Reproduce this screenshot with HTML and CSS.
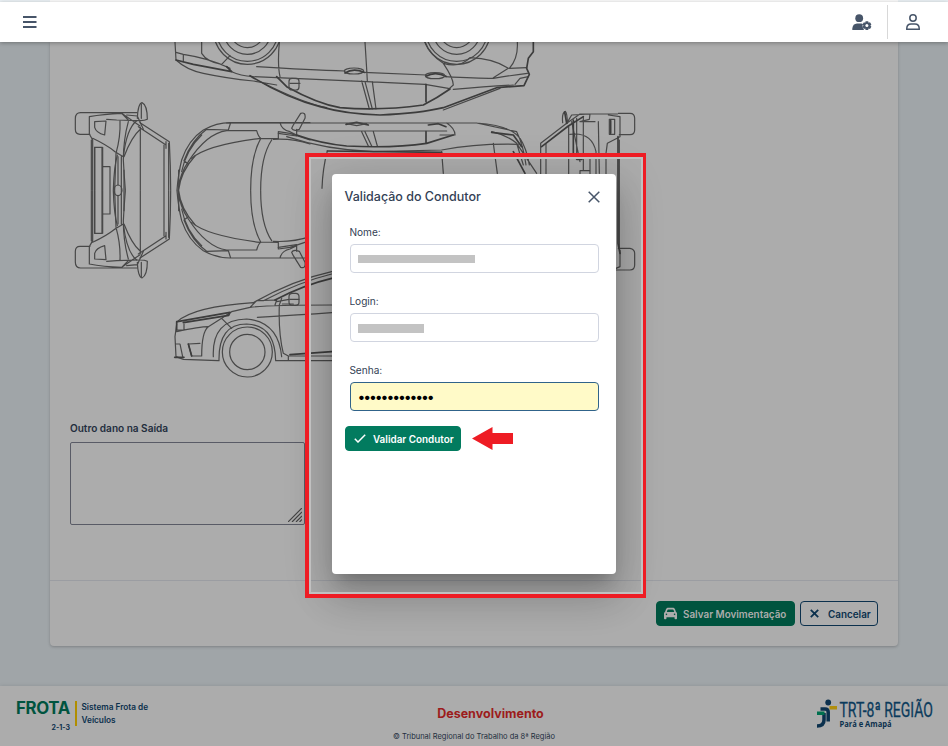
FILE: index.html
```html
<!DOCTYPE html>
<html lang="pt-BR">
<head>
<meta charset="utf-8">
<title>Frota - Validação do Condutor</title>
<link rel="stylesheet" href="styles.css">
</head>
<body>
<div class="page">
  <div class="strip"><div class="strip-card"></div></div>
  <header class="topbar">
    <svg class="menu" viewBox="0 0 14 12"><path d="M0 1h13.5M0 6h13.5M0 11h13.5"/></svg>
    <svg class="usergear" viewBox="0 0 20 17"><circle cx="7.2" cy="4.2" r="3.9"/><path d="M.3 16v-1.4Q.8 9.8 5 9.6h4.500q.8 0 1.400.3-1 2.500.1 4.100.3 1 1.200 2z"/><path d="M13.600 7.200h2.600l.4 1.500 1.400-.5 1.400 2.200-1 1.100 1 1.200-1.400 2.200-1.400-.4-.4 1.400h-2.600l-.4-1.400-1.300.4-1.400-2.200 1-1.200-1-1.100 1.400-2.200 1.300.5z"/><circle class="hole" cx="14.900" cy="11.500" r="1.500"/></svg>
    <span class="divider"></span>
    <svg class="user" viewBox="0 0 14 16"><circle cx="7" cy="4" r="3.200"/><path d="M.8 15.200v-1Q1 10 5 9.900h4q4 .1 4.200 4.300v1z"/></svg>
  </header>
  <main class="content">
    <section class="card">
      <svg class="cars" viewBox="70 42 580 340">
        <defs>
          <g id="half">
            <path d="M90 68H62Q46 68 46 86V118Q46 133 60 133H90M98 300V150L88 132V80Q130 72 185 70L240 108M104 95L138 93L134 135Q108 128 104 112ZM60 68L230 68M140 88L170 90L235 92M98 145Q140 165 165 185L190 200M180 92Q182 140 168 190L164 300M205 95Q190 150 190 210Q192 250 196 300M184 200V300M174 200V285M241 112V300M241 118Q215 140 192 200M326 160V300M312 165V300M185 70L205 90M104 300V172H126V300M128 230H150V300M94 150V300M232 85Q234 40 246 38Q262 45 262 88Q255 92 240 92M200 75L232 78L250 118"/>
            <path class="bold" d="M190 200Q200 115 230 92M240 98L328 155Q332 230 332 300M235 110L318 165M244 42V85M160 300Q162 230 172 195M318 155V175M192 240V300M104 172V300M128 172V300"/>
            <path d="M351 300Q355 250 365 210Q385 150 430 120Q470 98 510 98H750M372 212Q395 150 440 118L505 120L512 98M365 245Q378 180 425 135M602 146Q572 200 572 300M635 150Q602 200 602 300M602 146L655 145V125L690 130L750 150M640 148Q700 145 750 162M700 105L722 70Q738 65 735 85L718 118Q700 125 695 115ZM660 98Q665 120 690 125L710 135V118M372 212L385 222M395 205Q440 165 600 145"/>
            <path class="bold" d="M354 300Q360 250 385 215Q440 130 500 122H590Q595 140 602 145M356 240V300M356 300Q362 245 405 198M655 130L710 138"/>
          </g>
        </defs>
        <g class="ink" transform="translate(60 90) scale(.33333)">
          <use href="#half"/>
          <use href="#half" transform="translate(0 602) scale(1 -1)"/>
          <ellipse cx="174" cy="301" rx="12" ry="16"/>
        </g>
        <g class="ink" transform="translate(160 35) scale(.33333)">
          <circle cx="262" cy="-13" r="101"/><circle cx="262" cy="-13" r="92"/><circle cx="262" cy="-13" r="71"/><circle cx="262" cy="-13" r="51"/>
          <circle cx="890" cy="-13" r="101"/><circle cx="890" cy="-13" r="92"/><circle cx="890" cy="-13" r="71"/><circle cx="890" cy="-13" r="51"/>
          <path d="M45 22L48 75Q80 105 130 115Q200 130 280 138L350 150M48 52L70 58Q150 70 210 100M70 58V80M125 22V55Q140 80 185 88L210 62M358 22Q352 90 360 125M615 22Q620 100 622 138M290 95Q450 105 555 108M610 112Q700 116 800 120M855 125Q950 130 1000 130M215 110Q240 122 280 125Q400 130 620 140L795 148L865 160M305 142Q430 205 500 218M605 138L628 222M615 140L637 222M637 140L648 222M795 22Q810 60 850 85Q880 130 880 150L865 163M880 163Q980 155 1060 150M930 68Q1000 70 1045 100L1000 128M1072 22Q1075 70 1048 100L1100 98M1000 130Q1060 120 1102 115M1065 148L1080 130L1105 125M850 225L1020 160M390 145H420M850 85Q900 100 930 68"/>
          <path class="bold" d="M48 75L100 88L215 110L200 95M270 122Q380 190 480 215Q560 238 660 240Q780 235 850 218L1010 158L1092 152L1108 118L1100 100L1105 70L1120 50V22M350 125L380 155Q470 205 540 218Q660 228 790 210Q830 190 870 162M798 148V200"/>
          <ellipse cx="582" cy="108" rx="29" ry="9"/><path class="bold" d="M555 114Q580 98 612 112M798 124Q825 108 858 124M558 268L590 262 625 270M805 270L835 266 858 275"/><ellipse cx="825" cy="122" rx="29" ry="9"/><rect x="387" y="130" width="30" height="35" rx="9"/>
          <path d="M200 264H950Q1050 270 1080 310Q1100 340 1108 390M950 264L1070 290Q1090 330 1098 390M995 290Q1040 300 1070 325L1090 390M845 345Q950 325 1075 328M410 288H860M860 264Q885 280 885 300L840 300M560 266L590 272 620 266M605 290L625 333M615 290L635 333M640 290L652 333M845 350L850 415M1000 325L1012 415M502 348Q488 400 486 460M380 305Q500 345 640 350L845 345M1070 325L1130 415"/>
          <path class="bold" d="M410 300Q480 325 560 333Q700 340 800 325L880 300M798 290V325M502 348L845 352M995 292L1060 300L1085 335M1060 350L1095 415"/>
        </g>
        <g class="ink" transform="translate(530 90) scale(.33333)">
          <path d="M32 255V160L110 100L150 72H262M48 255V162M265 70H300Q314 70 314 85V120Q314 134 300 134H268M98 98Q95 68 106 64Q112 70 112 100M116 108V255M125 95L150 215M140 85V205M160 80V240M120 133Q185 125 198 185V255M205 95L208 250M150 95H195M235 75L270 80V140L232 160L228 190V255M238 88H254V133H238ZM268 150V475M180 205V255M150 255V242H180V250M265 475H300Q314 478 314 490V525Q314 540 300 540H250M270 480V530L258 535M110 100L125 75L180 72L178 88L150 95"/>
          <path class="bold" d="M35 170L115 108L160 80M130 90V200M264 140V460L270 490M242 92V130M104 66L110 100M140 208H156"/>
        </g>
        <g class="ink" transform="translate(150 250) scale(.33333)">
          <circle cx="292" cy="306" r="75"/><circle cx="292" cy="306" r="53"/>
          <path d="M82 215Q130 170 310 158M80 222L75 260L78 320L100 328L205 332M190 320Q185 208 290 207Q385 215 395 320M207 332Q205 222 290 222Q375 225 377 332H545M78 240H102V222M80 245Q150 230 175 230Q155 245 155 318L125 318L115 282L150 280M78 282L90 282L98 320M215 205L245 235M175 230L215 205L245 185M310 158Q430 90 545 65M340 152Q450 95 545 72M300 172L320 152L380 150L375 165M245 185L300 172Q360 165 545 165M322 202Q450 195 545 188M395 145L388 165Q385 250 400 310L415 318H545M415 318V332M380 155L417 148M397 162H430"/>
          <path class="bold" d="M82 215L240 187L236 196L100 218M375 150Q460 105 545 85M74 322H102M115 282L125 318M420 314L545 305M80 215V240"/>
          <rect x="417" y="130" width="30" height="36" rx="10"/><path d="M420 148H447"/>
        </g>
      </svg>
      <div class="damage">
        <label for="dano">Outro dano na Saída</label>
        <div id="dano" class="textarea"><svg viewBox="0 0 14 14"><path d="M0 14L14 0M4 14L14 4M8 14L14 8M11.500 14L14 11.500"/></svg></div>
      </div>
      <div class="actions">
        <button class="btn save"><svg viewBox="0 0 512 512"><path d="M135.200 117.400L109.100 192H402.900l-26.100-74.600C372.300 104.600 360.200 96 346.600 96H165.400c-13.600 0-25.700 8.600-30.200 21.400zM39.600 196.800L74.800 96.300C88.300 57.800 124.600 32 165.400 32H346.600c40.800 0 77.100 25.800 90.600 64.300l35.200 100.500c23.200 9.600 39.600 32.500 39.600 59.200V448c0 17.700-14.300 32-32 32H448c-17.700 0-32-14.300-32-32V400H96v48c0 17.700-14.300 32-32 32H32c-17.700 0-32-14.300-32-32V256c0-26.700 16.400-49.600 39.600-59.200zM128 288a32 32 0 1 0-64 0 32 32 0 1 0 64 0zm288 32a32 32 0 1 0 0-64 32 32 0 1 0 0 64z"/></svg><span>Salvar Movimentação</span></button>
        <button class="btn cancel"><svg viewBox="0 0 8 8"><path d="M.7.7l6.600 6.600M7.300.7L.7 7.300"/></svg><span>Cancelar</span></button>
      </div>
    </section>
  </main>
  <footer class="footer">
    <div class="brand">
      <div class="brand-name"><strong>FROTA</strong><span>2-1-3</span></div>
      <div class="brand-desc">Sistema Frota de<br>Veículos</div>
    </div>
    <div class="env"><strong>Desenvolvimento</strong><small>© Tribunal Regional do Trabalho da 8ª Região</small></div>
    <svg class="trt" viewBox="816 690 124 46">
      <circle class="navy" cx="828.200" cy="702.500" r="2.900"/>
      <path class="limb" d="M820.500 709H825Q828.200 709 828.200 712V721.500"/>
      <path class="limb" d="M824 713V720Q824 726 817 726"/>
      <path class="yellow" d="M829.500 706h7.500v3.500h-7.500z"/><path class="green" d="M817 711.500h7.500v3.500H817z"/>
      <text class="trt-name" x="839.500" y="716.700" textLength="93.500" lengthAdjust="spacingAndGlyphs">TRT-8ª REGIÃO</text>
      <text class="trt-place" x="839.500" y="727" textLength="52" lengthAdjust="spacingAndGlyphs">Pará e Amapá</text>
    </svg>
  </footer>
</div>
<div class="dialog" role="dialog">
  <div class="dialog-head"><h1>Validação do Condutor</h1><svg viewBox="0 0 12 12"><path d="M.7.7l10.600 10.600M11.300.7L.7 11.300"/></svg></div>
  <div class="fields">
    <div class="field"><label>Nome:</label><div class="input"><span class="mask mask-name"></span></div></div>
    <div class="field"><label>Login:</label><div class="input"><span class="mask mask-login"></span></div></div>
    <div class="field"><label>Senha:</label><div class="input filled"><span class="dots">•••••••••••••</span></div></div>
  </div>
  <div class="submit">
    <button class="btn validate"><svg viewBox="0 0 12 9"><path d="M.8 4.800l3.200 3.200L11.200.8"/></svg><span>Validar Condutor</span></button>
    <svg class="arrow" viewBox="0 0 41 23"><path d="M0 11.500L20.500 0v6H41v11H20.500v6z"/></svg>
  </div>
</div>
<div class="frame"></div>
</body>
</html>
```
FILE: styles.css
```css
* { box-sizing: border-box; }
body { margin: 0; width: 948px; height: 746px; overflow: hidden; position: relative; font-family: Inter, "Liberation Sans", sans-serif; color: #334155; }
svg { display: block; flex: none; }
h1 { margin: 0; }
button { font: inherit; margin: 0; }
.page { display: flex; flex-direction: column; height: 746px; background: #a0a5a8; }
.strip { height: 2px; background: #eaf0f4; padding: 0 50px; }
.strip-card { height: 2px; background: #fafafa; }
.topbar { height: 40px; background: #fff; display: flex; align-items: center; padding: 0 28px 0 23px; box-shadow: 0 1px 4px rgba(0,0,0,.3); position: relative; }
.menu { width: 14px; height: 12px; }
.menu path { stroke: #475569; stroke-width: 2; }
.usergear { width: 20px; height: 17px; margin-left: auto; fill: #475569; }
.usergear .hole { fill: #fff; }
.divider { width: 1px; height: 34px; margin-left: 15px; background: #d8d8d8; }
.user { width: 14px; height: 16px; margin-left: 18px; fill: none; stroke: #475569; stroke-width: 1.500; }
.content { height: 644px; padding: 0 50px; }
.card { height: 604px; background: #acacac; border-radius: 0 0 4px 4px; box-shadow: 0 1px 3px rgba(0,0,0,.22); }
.cars { width: 580px; height: 340px; margin-left: 20px; }
.ink { fill: none; stroke: #484848; stroke-width: 3.600; stroke-linejoin: round; stroke-linecap: round; }
.ink .bold { stroke: #3c3c3c; stroke-width: 5; }
.damage { height: 198px; padding: 40px 20px 0; }
.damage label { display: block; font-size: 10.050px; font-weight: 600; line-height: 13px; color: #232e3e; }
.textarea { width: 235px; height: 83px; margin-top: 7px; border: 1px solid #595b66; border-radius: 2px; display: flex; justify-content: flex-end; align-items: flex-end; padding: 2px; }
.textarea svg { width: 14px; height: 14px; }
.textarea path { stroke: #444; stroke-width: 1.200; }
.actions { height: 66px; border-top: 1px solid #9b9da2; padding: 20px 20px 0; display: flex; justify-content: flex-end; gap: 5px; }
.btn { height: 25px; border: 1px solid #027b5f; border-radius: 4px; display: flex; align-items: center; font-size: 9.900px; font-weight: 600; white-space: nowrap; padding: 0 7px; }
.save { width: 139px; background: #00543f; border-color: #00543f; color: #acacac; gap: 6px; }
.save svg { width: 13px; height: 13px; fill: #acacac; }
.cancel { width: 78px; background: transparent; border-color: #0b304d; color: #0b304d; padding: 0 9px; gap: 9px; }
.cancel svg { width: 9px; height: 9px; }
.cancel path { stroke: #0b304d; stroke-width: 1.600; }
.footer { height: 60px; background: #acacac; box-shadow: 0 0 4px rgba(0,0,0,.12); display: grid; grid-template-columns: 316px 316px 316px; position: relative; }
.brand { display: flex; padding: 15px 0 0 15px; }
.brand-name { width: 55px; height: 32px; display: flex; flex-direction: column; align-items: flex-end; }
.brand-name strong { font-size: 16.800px; line-height: 15px; font-weight: 700; color: #00543f; letter-spacing: -.3px; }
.brand-name span { margin-top: 7px; font-size: 7px; line-height: 9px; font-weight: 700; color: #0b304d; }
.brand-desc { height: 25px; margin-left: 5px; border-left: 2px solid #b08e00; padding-left: 4.500px; font-size: 8.250px; line-height: 13px; font-weight: 600; color: #0b304d; }
.env { text-align: center; padding-top: 20px; }
.env strong { display: block; font-size: 12.500px; line-height: 16px; font-weight: 700; color: #9c1c1c; padding-left: 33px; }
.env small { display: block; margin-top: 10px; font-size: 7.500px; line-height: 10px; color: #232e3e; }
.trt { width: 124px; height: 46px; margin: 4px 0 0 184px; }
.navy { fill: #0b304d; }
.limb { fill: none; stroke: #0b304d; stroke-width: 3.500; }
.yellow { fill: #b08e0e; }
.green { fill: #00704f; }
.trt-name { font: 400 20.500px Roboto, sans-serif; fill: #0b3b5c; stroke: #0b3b5c; stroke-width: .3; }
.trt-place { font: 700 8px "Open Sans", sans-serif; fill: #0b304d; }
.dialog { position: absolute; left: 332px; top: 174px; width: 284px; height: 400px; background: #fff; border-radius: 4px; box-shadow: 0 11px 15px -7px rgba(0,0,0,.2), 0 24px 38px 3px rgba(0,0,0,.14), 0 9px 46px 8px rgba(0,0,0,.12); }
.dialog-head { display: flex; justify-content: space-between; align-items: center; padding: 13px 16px 0 12.500px; height: 33px; }
.dialog-head h1 { font-size: 12.500px; font-weight: 500; line-height: 20px; color: #334155; white-space: nowrap; }
.dialog-head svg { width: 12px; height: 12px; }
.dialog-head path { stroke: #475569; stroke-width: 1.500; }
.fields { padding: 19px 17px 0; }
.field { height: 69px; }
.field label { display: block; font-size: 10.100px; line-height: 13px; padding-left: .4px; }
.input { margin: 5px 0 0 1px; width: 249px; height: 29px; border: 1px solid #d1d5e0; border-radius: 4px; display: flex; align-items: center; padding-left: 7px; }
.filled { background: #fffac8; border-color: #30638a; }
.mask { height: 8px; background: #c3c3c3; }
.mask-name { width: 117px; }
.mask-login { width: 66px; height: 9px; margin-top: 1px; }
.dots { font: 14px Inter, sans-serif; letter-spacing: -2.100px; color: #000; margin-left: -.5px; }
.submit { display: flex; align-items: center; gap: 11px; padding-left: 13px; margin-top: -7px; }
.validate { width: 116px; background: #027b5f; color: #fff; padding: 1px 8px 0; gap: 7px; }
.validate svg { width: 12px; height: 9px; margin-top: -2px; fill: none; stroke: #fff; stroke-width: 1.500; }
.arrow { width: 41px; height: 23px; fill: #ee1c24; }
.frame { position: absolute; left: 305px; top: 153px; width: 341px; height: 445px; border: 4px solid #ee1c24; border-right-width: 3px; box-shadow: inset 0 0 0 2px #c0c0c0; }
```
